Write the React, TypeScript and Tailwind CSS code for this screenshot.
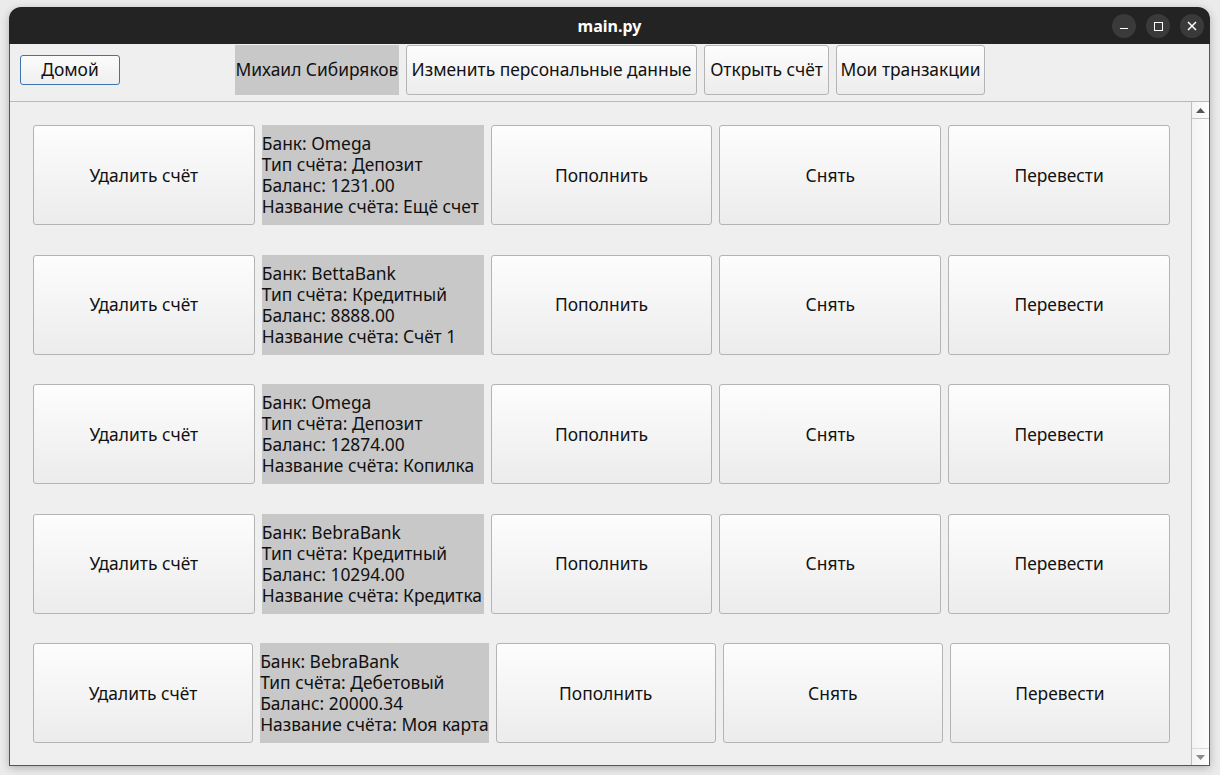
import React from 'react';

const accounts = [
    { bank: 'Omega', type: 'Депозит', balance: '1231.00', name: 'Ещё счет' },
    { bank: 'BettaBank', type: 'Кредитный', balance: '8888.00', name: 'Счёт 1' },
    { bank: 'Omega', type: 'Депозит', balance: '12874.00', name: 'Копилка' },
    { bank: 'BebraBank', type: 'Кредитный', balance: '10294.00', name: 'Кредитка' },
    { bank: 'BebraBank', type: 'Дебетовый', balance: '20000.34', name: 'Моя карта' },
];

const btn =
    'flex-1 basis-0 min-w-0 h-full flex items-center justify-center rounded-[3px] border border-[#b4b4b4] bg-gradient-to-b from-[#fdfdfd] to-[#ececec] text-[#111] text-[17.4px]';

const App = () => {
    return (
        <div
            className="w-[1220px] h-[775px] bg-[#ebebeb] pt-[7px] pl-[9px] overflow-hidden"
            style={{ fontFamily: '"Noto Sans", "Open Sans", sans-serif' }}
        >
            <div className="w-[1201px] h-[759px] flex flex-col rounded-t-[12px] overflow-hidden shadow-[0_2px_8px_rgba(0,0,0,0.25)]">
                {/* title bar */}
                <div className="relative h-[37px] shrink-0 bg-[#232323] flex items-center justify-center">
                    <span className="text-white font-bold text-[16px]">main.py</span>
                    <div className="absolute right-[6px] top-[7px] flex gap-[10px]">
                        <div className="w-[24px] h-[24px] rounded-full bg-[#3a3a3a] flex items-center justify-center">
                            <div className="w-[8px] h-[1.5px] bg-white mt-[5px]" />
                        </div>
                        <div className="w-[24px] h-[24px] rounded-full bg-[#3a3a3a] flex items-center justify-center">
                            <div className="w-[9px] h-[9px] border-[1.5px] border-white" />
                        </div>
                        <div className="w-[24px] h-[24px] rounded-full bg-[#3a3a3a] flex items-center justify-center">
                            <svg width="10" height="10" viewBox="0 0 10 10">
                                <path d="M1 1L9 9M9 1L1 9" stroke="white" strokeWidth="1.5" />
                            </svg>
                        </div>
                    </div>
                </div>

                <div className="flex-1 flex flex-col bg-[#efefef] border-x border-b border-[#555]">
                    {/* toolbar */}
                    <div className="h-[57px] shrink-0 flex items-center pb-[6px] text-[17.4px] text-[#111]">
                        <button className="ml-[10px] w-[100px] h-[30px] rounded-[3px] border border-[#3a76ad] bg-gradient-to-b from-[#fbfbfb] to-[#efefef]">
                            Домой
                        </button>
                        <div className="ml-[115px] w-[164px] h-[50px] bg-[#c8c8c8] flex items-center justify-center whitespace-nowrap">
                            Михаил Сибиряков
                        </div>
                        <button className="ml-[7px] w-[291px] h-[50px] rounded-[3px] border border-[#b4b4b4] bg-gradient-to-b from-[#fdfdfd] to-[#ececec] whitespace-nowrap">
                            Изменить персональные данные
                        </button>
                        <button className="ml-[7px] w-[125px] h-[50px] rounded-[3px] border border-[#b4b4b4] bg-gradient-to-b from-[#fdfdfd] to-[#ececec] whitespace-nowrap">
                            Открыть счёт
                        </button>
                        <button className="ml-[7px] w-[149px] h-[50px] rounded-[3px] border border-[#b4b4b4] bg-gradient-to-b from-[#fdfdfd] to-[#ececec] whitespace-nowrap">
                            Мои транзакции
                        </button>
                    </div>

                    {/* scroll area */}
                    <div className="flex-1 flex border-t border-[#b9b9b9]">
                        <div className="flex-1 flex flex-col justify-between pt-[23px] pb-[22px] pl-[23px] pr-[21px]">
                            {accounts.map((a, i) => (
                                <div key={i} className="h-[100px] flex gap-[7px]">
                                    <button className={btn}>Удалить счёт</button>
                                    <div className="flex-1 basis-[2px] min-w-fit h-full bg-[#c8c8c8] flex flex-col justify-center text-[17.4px] leading-[21px] text-[#111] whitespace-nowrap">
                                        <div>Банк: {a.bank}</div>
                                        <div>Тип счёта: {a.type}</div>
                                        <div>Баланс: {a.balance}</div>
                                        <div>Название счёта: {a.name}</div>
                                    </div>
                                    <button className={btn}>Пополнить</button>
                                    <button className={btn}>Снять</button>
                                    <button className={btn}>Перевести</button>
                                </div>
                            ))}
                        </div>
                        {/* scrollbar */}
                        <div className="w-[18px] flex flex-col border-l border-[#bdbdbd] bg-gradient-to-r from-[#f3f3f3] to-[#fdfdfd]">
                            <div className="h-[17px] flex items-center justify-center border-b border-[#c4c4c4]">
                                <svg width="9" height="5" viewBox="0 0 9 5">
                                    <path d="M4.5 0L9 5H0Z" fill="#555" />
                                </svg>
                            </div>
                            <div className="flex-1" />
                            <div className="h-[17px] flex items-center justify-center border-t border-[#dcdcdc]">
                                <svg width="9" height="5" viewBox="0 0 9 5">
                                    <path d="M0 0H9L4.5 5Z" fill="#8a8a8a" />
                                </svg>
                            </div>
                        </div>
                    </div>
                </div>
            </div>
        </div>
    );
};

export default App;
